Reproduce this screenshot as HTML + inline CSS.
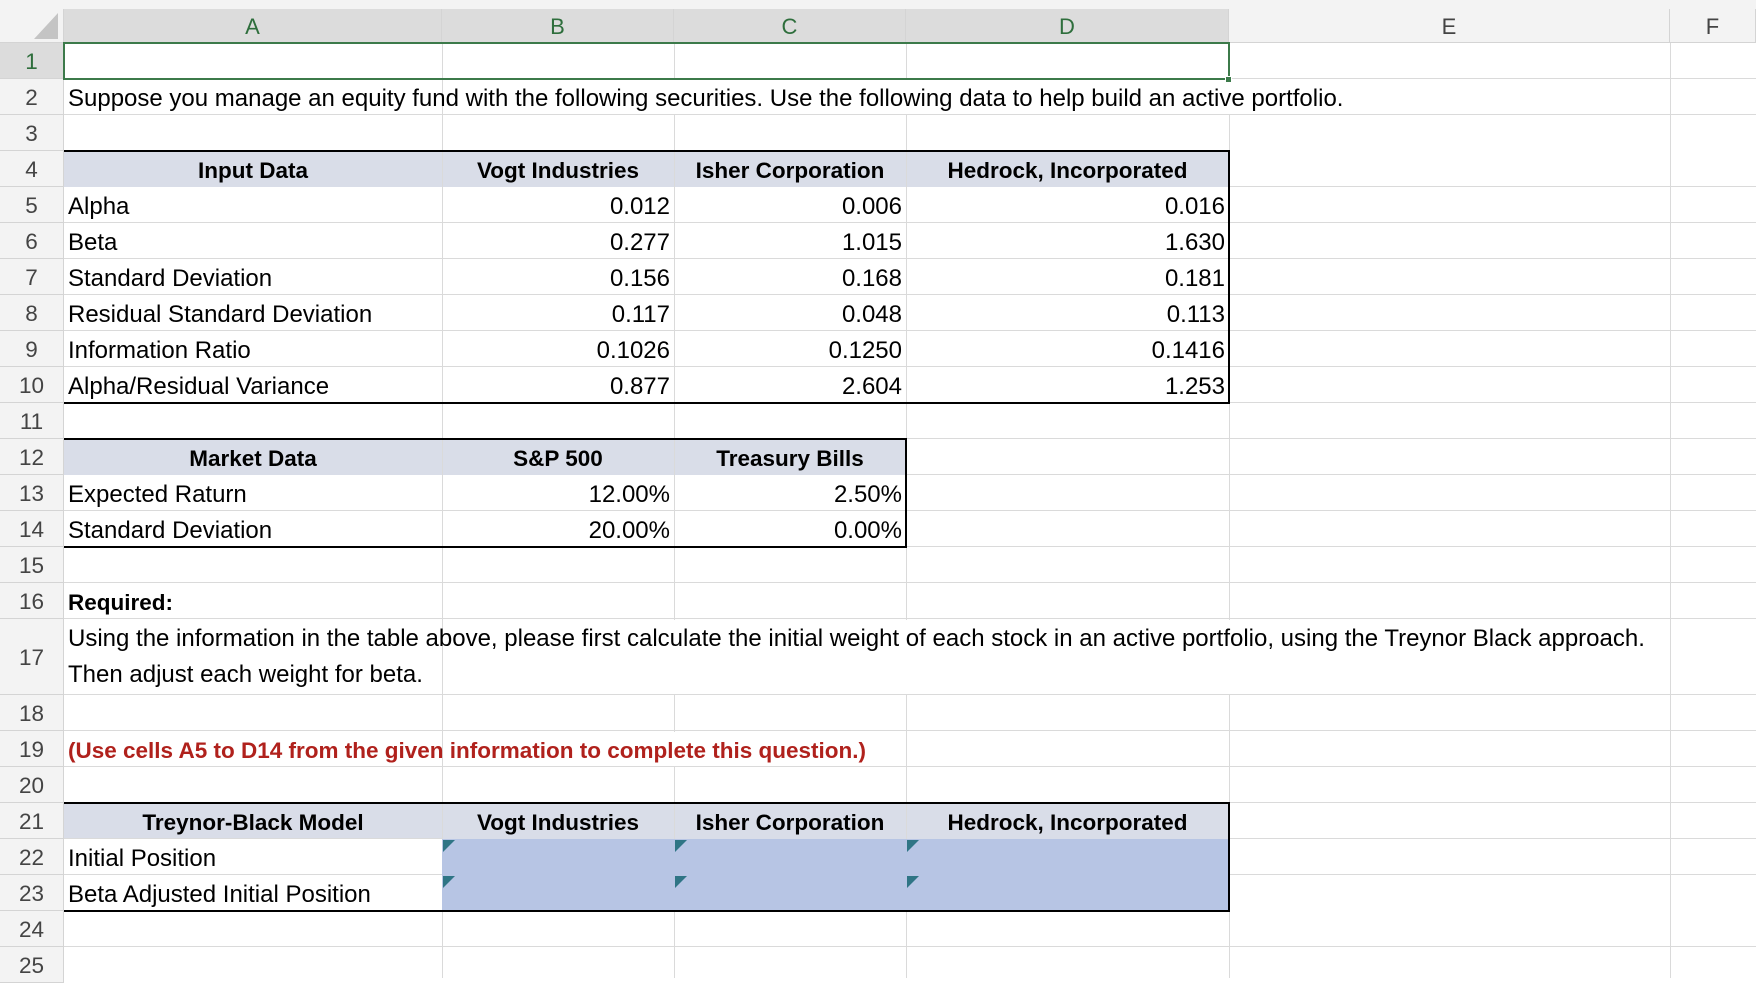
<!DOCTYPE html>
<html><head><meta charset="utf-8"><style>
*{margin:0;padding:0;box-sizing:border-box}
body{width:1756px;height:978px;overflow:hidden;background:#fff;font-family:"Liberation Sans",Arial,sans-serif;position:relative;color:#000}
.topbar{position:absolute;left:0;top:0;width:1756px;height:9px;background:#f3f3f3}
.hdr{position:absolute;top:9px;height:34px;background:#f3f3f3;border-right:1px solid #d4d4d4;border-bottom:1px solid #d4d4d4;color:#444;font-size:22px;text-align:center;line-height:36px}
.hdr.sel{background:#dcdcdc;color:#2e6e3c;border-bottom:1px solid #c0c0c0}
.rh{position:absolute;left:0;width:64px;background:#f3f3f3;border-bottom:1px solid #d4d4d4;border-right:1px solid #d4d4d4;color:#444;font-size:22.5px;text-align:center}
.rh.sel{background:#dcdcdc;color:#2e6e3c}
.vl{position:absolute;top:43px;bottom:0;width:1px;background:#dadada}
.hl{position:absolute;left:64px;right:0;height:1px;background:#dadada}
.t{position:absolute;font-size:24px;white-space:nowrap;line-height:38px}
.b{font-weight:bold;font-size:22.5px}
.r{text-align:right}
.c{text-align:center}
.fill{position:absolute;background:#d9dde8}
.blue{position:absolute;background:#b7c5e4}
.tri{position:absolute;width:0;height:0;border-top:12px solid #2f7585;border-right:12px solid transparent}
</style></head><body>
<div class="topbar"></div>
<div class="hdr" style="left:0;width:64px"><svg width="64" height="34" style="position:absolute;left:0;top:0"><polygon points="58,4 58,30 34,30" fill="#c4c4c4"/></svg></div>
<div class="hdr sel" style="left:64px;width:378px">A</div>
<div class="hdr sel" style="left:442px;width:232px">B</div>
<div class="hdr sel" style="left:674px;width:232px">C</div>
<div class="hdr sel" style="left:906px;width:323px">D</div>
<div class="hdr" style="left:1229px;width:441px">E</div>
<div class="hdr" style="left:1670px;width:86px">F</div>

<div class="fill" style="left:64px;top:151px;width:1165px;height:36px"></div>
<div class="fill" style="left:64px;top:439px;width:842px;height:36px"></div>
<div class="fill" style="left:64px;top:803px;width:1165px;height:36px"></div>

<div class="vl" style="left:442px"></div>
<div class="vl" style="left:674px"></div>
<div class="vl" style="left:906px"></div>
<div class="vl" style="left:1229px"></div>
<div class="vl" style="left:1670px"></div>

<div class="rh sel" style="top:43px;height:36px;line-height:38px">1</div>
<div class="rh" style="top:79px;height:36px;line-height:38px">2</div>
<div class="rh" style="top:115px;height:36px;line-height:38px">3</div>
<div class="rh" style="top:151px;height:36px;line-height:38px">4</div>
<div class="rh" style="top:187px;height:36px;line-height:38px">5</div>
<div class="rh" style="top:223px;height:36px;line-height:38px">6</div>
<div class="rh" style="top:259px;height:36px;line-height:38px">7</div>
<div class="rh" style="top:295px;height:36px;line-height:38px">8</div>
<div class="rh" style="top:331px;height:36px;line-height:38px">9</div>
<div class="rh" style="top:367px;height:36px;line-height:38px">10</div>
<div class="rh" style="top:403px;height:36px;line-height:38px">11</div>
<div class="rh" style="top:439px;height:36px;line-height:38px">12</div>
<div class="rh" style="top:475px;height:36px;line-height:38px">13</div>
<div class="rh" style="top:511px;height:36px;line-height:38px">14</div>
<div class="rh" style="top:547px;height:36px;line-height:38px">15</div>
<div class="rh" style="top:583px;height:36px;line-height:38px">16</div>
<div class="rh" style="top:619px;height:76px;line-height:78px">17</div>
<div class="rh" style="top:695px;height:36px;line-height:38px">18</div>
<div class="rh" style="top:731px;height:36px;line-height:38px">19</div>
<div class="rh" style="top:767px;height:36px;line-height:38px">20</div>
<div class="rh" style="top:803px;height:36px;line-height:38px">21</div>
<div class="rh" style="top:839px;height:36px;line-height:38px">22</div>
<div class="rh" style="top:875px;height:36px;line-height:38px">23</div>
<div class="rh" style="top:911px;height:36px;line-height:38px">24</div>
<div class="rh" style="top:947px;height:36px;line-height:38px">25</div>

<div class="hl" style="top:78px"></div><div class="hl" style="top:114px"></div>
<div class="hl" style="top:186px;left:1229px"></div><div class="hl" style="top:222px"></div>
<div class="hl" style="top:258px"></div><div class="hl" style="top:294px"></div>
<div class="hl" style="top:330px"></div><div class="hl" style="top:366px"></div>
<div class="hl" style="top:402px"></div><div class="hl" style="top:438px;left:906px"></div>
<div class="hl" style="top:474px;left:906px"></div><div class="hl" style="top:510px"></div>
<div class="hl" style="top:546px"></div><div class="hl" style="top:582px"></div>
<div class="hl" style="top:618px"></div><div class="hl" style="top:694px"></div>
<div class="hl" style="top:730px"></div><div class="hl" style="top:766px"></div>
<div class="hl" style="top:802px;left:1229px"></div><div class="hl" style="top:838px;left:64px;width:378px"></div>
<div class="hl" style="top:838px;left:1229px"></div><div class="hl" style="top:874px;left:64px;width:378px"></div>
<div class="hl" style="top:874px;left:1229px"></div><div class="hl" style="top:946px"></div>
<div style="position:absolute;left:443px;top:80px;width:1226px;height:34px;background:#fff"></div>
<div style="position:absolute;left:443px;top:620px;width:1226px;height:74px;background:#fff"></div>
<div style="position:absolute;left:443px;top:732px;width:462px;height:34px;background:#fff"></div>
<div class="blue" style="left:442px;top:839px;width:787px;height:72px"></div>

<div style="position:absolute;left:63px;top:42px;width:1167px;height:38px;border:2px solid #3c7a4a"></div>
<div style="position:absolute;left:1225px;top:76px;width:7px;height:7px;background:#3c7a4a;border:1px solid #fff"></div>

<div style="position:absolute;left:64px;top:150px;width:1166px;height:254px;border-top:2px solid #000;border-bottom:2px solid #000;border-right:2px solid #000"></div>
<div style="position:absolute;left:64px;top:438px;width:843px;height:110px;border-top:2px solid #000;border-bottom:2px solid #000;border-right:2px solid #000"></div>
<div style="position:absolute;left:64px;top:802px;width:1166px;height:110px;border-top:2px solid #000;border-bottom:2px solid #000;border-right:2px solid #000"></div>

<div class="tri" style="left:443px;top:840px"></div><div class="tri" style="left:675px;top:840px"></div><div class="tri" style="left:907px;top:840px"></div>
<div class="tri" style="left:443px;top:876px"></div><div class="tri" style="left:675px;top:876px"></div><div class="tri" style="left:907px;top:876px"></div>

<div class="t" style="left:68px;top:80px">Suppose you manage an equity fund with the following securities. Use the following data to help build an active portfolio.</div>
<div class="t b c" style="left:64px;top:152px;width:378px">Input Data</div>
<div class="t b c" style="left:442px;top:152px;width:232px">Vogt Industries</div>
<div class="t b c" style="left:674px;top:152px;width:232px">Isher Corporation</div>
<div class="t b c" style="left:906px;top:152px;width:323px">Hedrock, Incorporated</div>

<div class="t" style="left:68px;top:188px">Alpha</div>
<div class="t" style="left:68px;top:224px">Beta</div>
<div class="t" style="left:68px;top:260px">Standard Deviation</div>
<div class="t" style="left:68px;top:296px">Residual Standard Deviation</div>
<div class="t" style="left:68px;top:332px">Information Ratio</div>
<div class="t" style="left:68px;top:368px">Alpha/Residual Variance</div>

<div class="t r" style="left:442px;width:228px;top:188px">0.012</div>
<div class="t r" style="left:442px;width:228px;top:224px">0.277</div>
<div class="t r" style="left:442px;width:228px;top:260px">0.156</div>
<div class="t r" style="left:442px;width:228px;top:296px">0.117</div>
<div class="t r" style="left:442px;width:228px;top:332px">0.1026</div>
<div class="t r" style="left:442px;width:228px;top:368px">0.877</div>
<div class="t r" style="left:674px;width:228px;top:188px">0.006</div>
<div class="t r" style="left:674px;width:228px;top:224px">1.015</div>
<div class="t r" style="left:674px;width:228px;top:260px">0.168</div>
<div class="t r" style="left:674px;width:228px;top:296px">0.048</div>
<div class="t r" style="left:674px;width:228px;top:332px">0.1250</div>
<div class="t r" style="left:674px;width:228px;top:368px">2.604</div>
<div class="t r" style="left:906px;width:319px;top:188px">0.016</div>
<div class="t r" style="left:906px;width:319px;top:224px">1.630</div>
<div class="t r" style="left:906px;width:319px;top:260px">0.181</div>
<div class="t r" style="left:906px;width:319px;top:296px">0.113</div>
<div class="t r" style="left:906px;width:319px;top:332px">0.1416</div>
<div class="t r" style="left:906px;width:319px;top:368px">1.253</div>

<div class="t b c" style="left:64px;top:440px;width:378px">Market Data</div>
<div class="t b c" style="left:442px;top:440px;width:232px">S&amp;P 500</div>
<div class="t b c" style="left:674px;top:440px;width:232px">Treasury Bills</div>
<div class="t" style="left:68px;top:476px">Expected Raturn</div>
<div class="t" style="left:68px;top:512px">Standard Deviation</div>
<div class="t r" style="left:442px;width:228px;top:476px">12.00%</div>
<div class="t r" style="left:442px;width:228px;top:512px">20.00%</div>
<div class="t r" style="left:674px;width:228px;top:476px">2.50%</div>
<div class="t r" style="left:674px;width:228px;top:512px">0.00%</div>

<div class="t b" style="left:68px;top:584px">Required:</div>
<div class="t" style="left:68px;top:620px">Using the information in the table above, please first calculate the initial weight of each stock in an active portfolio, using the Treynor Black approach.</div>
<div class="t" style="left:68px;top:656px">Then adjust each weight for beta.</div>
<div class="t b" style="left:68px;top:732px;color:#b0211c">(Use cells A5 to D14 from the given information to complete this question.)</div>

<div class="t b c" style="left:64px;top:804px;width:378px">Treynor-Black Model</div>
<div class="t b c" style="left:442px;top:804px;width:232px">Vogt Industries</div>
<div class="t b c" style="left:674px;top:804px;width:232px">Isher Corporation</div>
<div class="t b c" style="left:906px;top:804px;width:323px">Hedrock, Incorporated</div>
<div class="t" style="left:68px;top:840px">Initial Position</div>
<div class="t" style="left:68px;top:876px">Beta Adjusted Initial Position</div>
</body></html>
